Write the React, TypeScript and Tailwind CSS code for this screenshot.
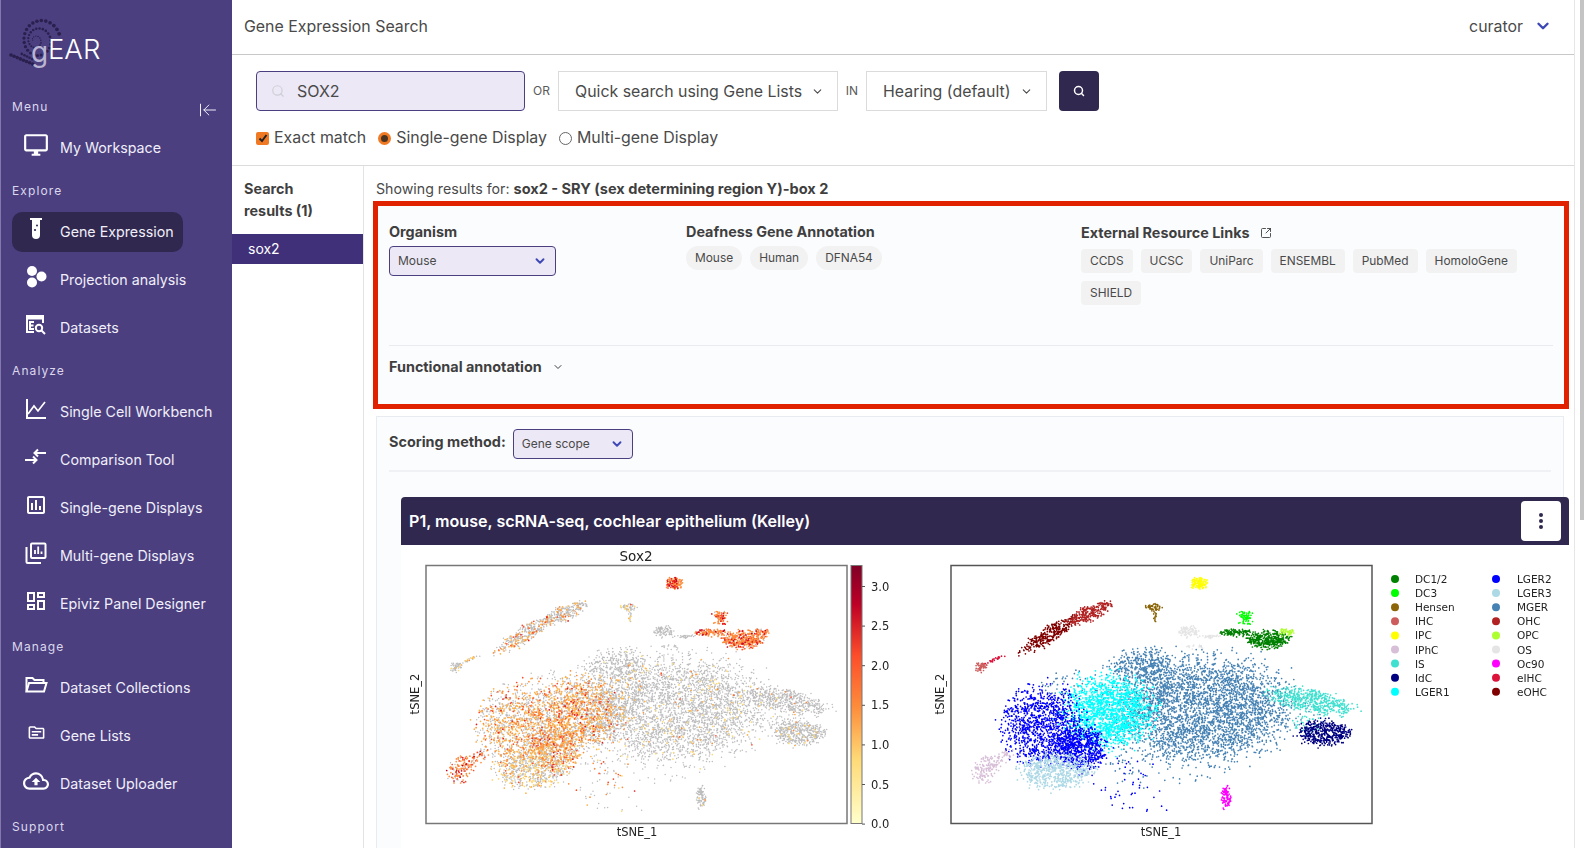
import React from 'react';
import { ArrowLeftToLine, ChevronDown, Search, SquareArrowOutUpRight } from 'lucide-react';
import {
  MdOutlineAssessment,
  MdOutlineCloudUpload,
  MdOutlineDashboard,
  MdOutlineDesktopWindows,
  MdOutlineTopic,
} from 'react-icons/md';

// --- sidebar icons that the packages don't carry ---
const TubeIcon = () => (
  <svg width="14" height="22" viewBox="0 0 14 22" fill="white">
    <rect x="1" y="0" width="12" height="2" />
    <path d="M3 2h8v15a4 4 0 0 1-8 0z" />
    <circle cx="6" cy="12" r="1.1" fill="#30284f" />
    <circle cx="8" cy="7.5" r="1" fill="#30284f" />
  </svg>
);

const CellsIcon = () => (
  <svg width="22" height="24" viewBox="0 0 22 24" fill="white">
    <circle cx="7" cy="6" r="5" />
    <circle cx="16.5" cy="11.5" r="5" />
    <circle cx="7" cy="17.5" r="5" />
  </svg>
);

const DatasetIcon = () => (
  <svg width="22" height="22" viewBox="0 0 22 22" fill="none" stroke="white" strokeWidth="2">
    <path d="M18 9V2H2v16h7" />
    <path d="M2 4h16" strokeWidth="3" />
    <path d="M9 8H5v7h4M5 11.5h3.5" />
    <circle cx="14" cy="14" r="3.2" />
    <path d="M16.5 16.5 20 20" />
  </svg>
);

const ChartIcon = () => (
  <svg width="22" height="22" viewBox="0 0 22 22" fill="none" stroke="white" strokeWidth="2">
    <path d="M2 1v19h19" />
    <path d="M3 16l6-8 4 5 7-9" strokeWidth="1.7" />
  </svg>
);

const CompareIcon = () => (
  <svg width="22" height="18" viewBox="0 0 22 18" fill="none" stroke="white" strokeWidth="2">
    <path d="M0 12h11M8 8.5l3.5 3.5L8 15.5" />
    <path d="M21 5H10M13 1.5 9.5 5l3.5 3.5" />
  </svg>
);

const MultiIcon = () => (
  <svg width="22" height="22" viewBox="0 0 22 22" fill="none" stroke="white" strokeWidth="2">
    <rect x="6" y="1.5" width="14.5" height="14.5" rx="1" />
    <path d="M1.5 5v15a1 1 0 0 0 1 1H16" />
    <path d="M10 12V8M13.2 12V4.5M16.5 12V9.5" strokeWidth="1.8" />
  </svg>
);

const FolderIcon = () => (
  <svg width="23" height="18" viewBox="0 0 23 18" fill="none" stroke="white" strokeWidth="2">
    <path d="M1.5 15.5V2h6l2 2h9v3" />
    <path d="M1.5 15.5 4 7h17.5L19 15.5z" />
  </svg>
);

const Logo = () => {
  const dots: React.ReactNode[] = [];
  // spiral of dots: step along the arc so the spacing stays even
  let a = -0.3;
  for (let t = 0; t < 1; ) {
    const rx = 18 * (1 - t) + 1;
    const ry = 20 * (1 - t) + 1;
    const cx = 40 - 7 * t;
    dots.push(
      <circle key={t} cx={cx + Math.cos(a) * rx} cy={30 + Math.sin(a) * ry} r={1.4 * (1 - t) + 0.5} fill="#2a1f4d" />,
    );
    const step = 3 * (1 - t) + 1.6;
    a -= step / Math.max(rx, 2);
    t = Math.min(1, (-0.3 - a) / 16);
  }
  for (let i = 0; i < 8; i++) {
    dots.push(<circle key={`a${i}`} cx={10 + i * 3.1} cy={45 + i * 1.3} r={1.8} fill="#2a1f4d" />);
    if (i > 2) dots.push(<circle key={`b${i}`} cx={13 + i * 2.6} cy={40 + i * 1.3} r={1.3} fill="#2a1f4d" />);
  }
  return (
    <svg width="110" height="70" viewBox="0 0 110 70" className="absolute left-0 top-[10px]">
      {dots}
    </svg>
  );
};

type NavItem = { label: string; icon: React.ReactNode; active?: boolean };

const sections: { title: string; items: NavItem[] }[] = [
  { title: 'Menu', items: [{ label: 'My Workspace', icon: <MdOutlineDesktopWindows size={26} color="white" /> }] },
  {
    title: 'Explore',
    items: [
      { label: 'Gene Expression', icon: <TubeIcon />, active: true },
      { label: 'Projection analysis', icon: <CellsIcon /> },
      { label: 'Datasets', icon: <DatasetIcon /> },
    ],
  },
  {
    title: 'Analyze',
    items: [
      { label: 'Single Cell Workbench', icon: <ChartIcon /> },
      { label: 'Comparison Tool', icon: <CompareIcon /> },
      { label: 'Single-gene Displays', icon: <MdOutlineAssessment size={24} color="white" /> },
      { label: 'Multi-gene Displays', icon: <MultiIcon /> },
      { label: 'Epiviz Panel Designer', icon: <MdOutlineDashboard size={24} color="white" /> },
    ],
  },
  {
    title: 'Manage',
    items: [
      { label: 'Dataset Collections', icon: <FolderIcon /> },
      { label: 'Gene Lists', icon: <MdOutlineTopic size={19} color="white" /> },
      { label: 'Dataset Uploader', icon: <MdOutlineCloudUpload size={26} color="white" /> },
    ],
  },
  { title: 'Support', items: [] },
];

const Sidebar = () => (
  <aside className="relative w-[232px] shrink-0 overflow-hidden border-l border-[#8278ab] bg-[#4b3f80]">
    <div className="relative h-[98px]">
      <Logo />
      <div className="absolute left-[30px] top-[32px] text-[28px] leading-[40px] text-[#b9b4d2]">g</div>
      <div className="absolute left-[47px] top-[31px] text-[27.5px] leading-[36px] font-light text-white">EAR</div>
    </div>
    <ArrowLeftToLine size={20} strokeWidth={1.2} color="#f0eef8" className="absolute left-[197px] top-[100px]" />
    {sections.map((section, i) => (
      <div key={section.title}>
        <div className={`mb-3 ml-[11px] h-[18px] text-xs leading-[18px] tracking-[1.1px] text-[#dcd8ec] ${i > 0 ? 'mt-[14px]' : ''}`}>
          {section.title}
        </div>
        <div className="flex flex-col gap-2">
          {section.items.map((item) => (
            <div
              key={item.label}
              className={`ml-[11px] flex h-10 w-[171px] items-center whitespace-nowrap rounded-[10px] text-[14.25px] text-[#f0eef8] ${item.active ? 'bg-[#30284f]' : ''}`}
            >
              <span className="mb-[7px] flex w-[48px] shrink-0 justify-center">{item.icon}</span>
              {item.label}
            </div>
          ))}
        </div>
      </div>
    ))}
  </aside>
);

const Caret = ({ size = 16 }: { size?: number }) => (
  <ChevronDown size={size} strokeWidth={3.2} color="#3d47b5" />
);

const FakeSelect = ({ label, width }: { label: string; width: string }) => (
  <div className={`flex h-10 items-center justify-between border border-[#dbdbdb] bg-white pl-[16px] pr-[13px] pt-px text-[15.9px] text-[#4a4a4a] ${width}`}>
    {label}
    <ChevronDown size={13} strokeWidth={2} color="#4a4a4a" />
  </div>
);

const SearchBar = () => (
  <div className="h-[111px] shrink-0 border-b border-[#dcdcdc] pl-6 pt-4">
    <div className="flex items-center">
      <div className="flex h-10 w-[269px] items-center rounded-[4px] border border-[#4b3f80] bg-[#ece8f5] pl-[14px] text-base text-[#4a4a4a]">
        <Search size={14} color="#cfcfd6" strokeWidth={2} />
        <span className="ml-[12px]">SOX2</span>
      </div>
      <span className="w-[33px] text-center text-xs text-[#5a5a5a]">OR</span>
      <FakeSelect label="Quick search using Gene Lists" width="w-[280px]" />
      <span className="w-[28px] text-center text-xs text-[#5a5a5a]">IN</span>
      <FakeSelect label="Hearing (default)" width="w-[181px]" />
      <div className="ml-3 flex h-10 w-10 items-center justify-center rounded-[4px] bg-[#30284f]">
        <Search size={12} color="white" strokeWidth={3} />
      </div>
    </div>
    <div className="mt-[17px] flex items-center text-[15.9px] leading-5 text-[#4a4a4a]">
      <span className="flex h-[13px] w-[13px] items-center justify-center rounded-[2px] bg-[#f07a24]">
        <svg width="10" height="10" viewBox="0 0 10 10" fill="none" stroke="#222" strokeWidth="2">
          <path d="M1.5 5.5 4 8l4.5-6" />
        </svg>
      </span>
      <span className="ml-[5px]">Exact match</span>
      <span className="ml-3 h-[13px] w-[13px] rounded-full border-[3px] border-[#f07a24] bg-[#4a3320]" />
      <span className="ml-[5px]">Single-gene Display</span>
      <span className="ml-3 h-[13px] w-[13px] rounded-full border border-[#666] bg-white" />
      <span className="ml-[5px]">Multi-gene Display</span>
    </div>
  </div>
);

const GeneSelect = ({ label, className }: { label: string; className: string }) => (
  <div className={`flex items-center justify-between rounded-[4px] border border-[#4b3f80] bg-[#ece8f5] pl-2 pr-2 text-xs text-[#4a4a4a] ${className}`}>
    {label}
    <Caret size={14} />
  </div>
);

const GenePanel = () => (
  <div className="ml-[-3px] mr-[-5px] h-[208px] border-[5px] border-[#e02200] bg-[#fbfcfe] px-[11px]">
    <div className="flex h-[139px] pt-[16px]">
      <div className="w-[297px] shrink-0">
        <div className="text-[14.4px] leading-5 font-bold text-[#3f3f3f]">Organism</div>
        <GeneSelect label="Mouse" className="mt-1 h-[30px] w-[167px]" />
      </div>
      <div className="w-[395px] shrink-0">
        <div className="text-[14.4px] leading-5 font-bold text-[#3f3f3f]">Deafness Gene Annotation</div>
        <div className="mt-1 flex gap-2">
          {['Mouse', 'Human', 'DFNA54'].map((t) => (
            <span key={t} className="flex h-6 items-center rounded-full bg-[#f2f2f2] px-[9px] text-[11.9px] text-[#4a4a4a]">
              {t}
            </span>
          ))}
        </div>
      </div>
      <div className="w-[460px]">
        <div className="mt-px flex items-center text-[14.4px] leading-5 font-bold text-[#3f3f3f]">
          External Resource Links
          <SquareArrowOutUpRight size={12} strokeWidth={1.8} className="ml-[10px]" />
        </div>
        <div className="mt-[6px] flex flex-wrap gap-x-2 gap-y-2">
          {['CCDS', 'UCSC', 'UniParc', 'ENSEMBL', 'PubMed', 'HomoloGene', 'SHIELD'].map((t) => (
            <span key={t} className="flex h-6 items-center rounded-[4px] bg-[#f2f2f2] px-[9px] text-[11.9px] text-[#4a4a4a]">
              {t}
            </span>
          ))}
        </div>
      </div>
    </div>
    <div className="flex items-center border-t border-[#e8ebf0] pt-[11px] text-[14.4px] leading-5 font-bold text-[#3f3f3f]">
      Functional annotation
      <ChevronDown size={12} strokeWidth={2} className="ml-[10px]" />
    </div>
  </div>
);

// --- t-SNE plots ---
const mulberry = (seed: number) => () => {
  seed |= 0;
  seed = (seed + 0x6d2b79f5) | 0;
  let t = Math.imul(seed ^ (seed >>> 15), 1 | seed);
  t = (t + Math.imul(t ^ (t >>> 7), 61 | t)) ^ t;
  return ((t ^ (t >>> 14)) >>> 0) / 4294967296;
};

const reds = ['#fed976', '#feb24c', '#fd8d3c', '#fc4e2a', '#e31a1c', '#bd0026'];

type Blob = { color: string; cx: number; cy: number; rx: number; ry: number; rot?: number; n: number; expr: number | ((x: number) => number); hot?: number };

// share of expressing cells falls off towards the right of the LGER1 cloud
const lgerFade = (x: number) => Math.max(0.1, Math.min(0.55, 0.55 - ((x - 150) / 60) * 0.45));

const blobs: Blob[] = [
  { color: '#4682b4', cx: 252, cy: 143, rx: 84, ry: 48, n: 3300, expr: 0.05 },
  { color: '#4682b4', cx: 190, cy: 101, rx: 32, ry: 16, n: 360, expr: 0.04 },
  { color: '#4682b4', cx: 115, cy: 118, rx: 30, ry: 13, n: 40, expr: 0.3, hot: 1 },
  { color: '#4682b4', cx: 215, cy: 195, rx: 70, ry: 25, n: 120, expr: 0.1 },
  { color: '#00ffff', cx: 158, cy: 146, rx: 42, ry: 33, n: 1700, expr: lgerFade, hot: 1 },
  { color: '#0000ff', cx: 92, cy: 160, rx: 40, ry: 36, n: 1150, expr: 0.5, hot: 1 },
  { color: '#0000ff', cx: 130, cy: 183, rx: 24, ry: 20, n: 620, expr: 0.55, hot: 1 },
  { color: '#0000ff', cx: 170, cy: 215, rx: 30, ry: 22, n: 35, expr: 0.5, hot: 2 },
  { color: '#add8e6', cx: 106, cy: 205, rx: 34, ry: 17, n: 620, expr: 0.35 },
  { color: '#d8bfd8', cx: 32, cy: 206, rx: 11, ry: 10, n: 90, expr: 0.85, hot: 2 },
  { color: '#d8bfd8', cx: 42, cy: 196, rx: 10, ry: 8, n: 50, expr: 0.85, hot: 2 },
  { color: '#d8bfd8', cx: 55, cy: 190, rx: 10, ry: 5, rot: -30, n: 25, expr: 0.85, hot: 2 },
  { color: '#40e0d0', cx: 358, cy: 135, rx: 40, ry: 11, rot: 10, n: 520, expr: 0.03 },
  { color: '#40e0d0', cx: 355, cy: 158, rx: 16, ry: 10, n: 40, expr: 0.03 },
  { color: '#000080', cx: 374, cy: 167, rx: 25, ry: 12, n: 450, expr: 0.04 },
  { color: '#ff00ff', cx: 275, cy: 232, rx: 5, ry: 10, n: 90, expr: 0.05 },
  { color: '#800000', cx: 100, cy: 68, rx: 32, ry: 7, rot: -32, n: 300, expr: 0.3, hot: 1 },
  { color: '#b22222', cx: 140, cy: 47, rx: 22, ry: 7, rot: -24, n: 240, expr: 0.15, hot: 1 },
  { color: '#cd5c5c', cx: 30, cy: 101, rx: 6, ry: 5, n: 50, expr: 0.1 },
  { color: '#dc143c', cx: 44, cy: 94, rx: 10, ry: 1.2, rot: -22, n: 20, expr: 0.4 },
  { color: '#ffff00', cx: 248, cy: 18, rx: 8, ry: 6, n: 130, expr: 1, hot: 2 },
  { color: '#8b6508', cx: 203, cy: 42, rx: 7, ry: 4, n: 50, expr: 0.3 },
  { color: '#8b6508', cx: 204, cy: 50, rx: 1.5, ry: 6, n: 15, expr: 0.3 },
  { color: '#e5e5e5', cx: 238, cy: 66, rx: 9, ry: 5, n: 90, expr: 0 },
  { color: '#e5e5e5', cx: 258, cy: 71, rx: 14, ry: 1.5, n: 30, expr: 0 },
  { color: '#e5e5e5', cx: 245, cy: 81, rx: 8, ry: 3, n: 12, expr: 0 },
  { color: '#008000', cx: 318, cy: 74, rx: 20, ry: 8, n: 360, expr: 0.92, hot: 2 },
  { color: '#008000', cx: 285, cy: 67, rx: 15, ry: 3.5, n: 100, expr: 0.9, hot: 2 },
  { color: '#00ff00', cx: 294, cy: 52, rx: 7, ry: 8, n: 70, expr: 0.95, hot: 2 },
  { color: '#adff2f', cx: 335, cy: 67, rx: 7, ry: 4, n: 40, expr: 0.9, hot: 2 },
  { color: '#0000ff', cx: 190, cy: 240, rx: 40, ry: 10, n: 10, expr: 0.5 },
];

const dotPaths = (() => {
  const rand = mulberry(42);
  const right: Record<string, string> = {};
  const leftGrey: string[] = [];
  const leftHot: Record<string, string> = {};
  blobs.forEach((b) => {
    const rot = ((b.rot ?? 0) * Math.PI) / 180;
    for (let i = 0; i < b.n; i++) {
      const a = rand() * Math.PI * 2;
      // soft edge: the radius spills past the ellipse by a little
      const r = Math.sqrt(rand()) * (1 + (rand() + rand() - 1) * 0.45);
      const ex = Math.cos(a) * r * b.rx;
      const ey = Math.sin(a) * r * b.ry;
      const x = b.cx + ex * Math.cos(rot) - ey * Math.sin(rot);
      const y = b.cy + ex * Math.sin(rot) + ey * Math.cos(rot);
      const seg = `M${x.toFixed(1)} ${y.toFixed(1)}h.01`;
      right[b.color] = (right[b.color] ?? '') + seg;
      const p = typeof b.expr === 'function' ? b.expr(x) : b.expr;
      if (rand() < p) {
        const idx = Math.min(5, (b.hot ?? 0) + Math.floor(rand() * rand() * 4));
        leftHot[reds[idx]] = (leftHot[reds[idx]] ?? '') + seg;
      } else {
        leftGrey.push(seg);
      }
    }
  });
  return { right, leftGrey: leftGrey.join(''), leftHot };
})();

const legend = [
  ['DC1/2', '#008000'],
  ['DC3', '#00ff00'],
  ['Hensen', '#8b6508'],
  ['IHC', '#cd5c5c'],
  ['IPC', '#ffff00'],
  ['IPhC', '#d8bfd8'],
  ['IS', '#40e0d0'],
  ['IdC', '#000080'],
  ['LGER1', '#00ffff'],
  ['LGER2', '#0000ff'],
  ['LGER3', '#add8e6'],
  ['MGER', '#4682b4'],
  ['OHC', '#b22222'],
  ['OPC', '#adff2f'],
  ['OS', '#e5e5e5'],
  ['Oc90', '#ff00ff'],
  ['eIHC', '#dc143c'],
  ['eOHC', '#800000'],
];

const Dots = ({ d, color, w = 1.7 }: { d: string; color: string; w?: number }) => (
  <path d={d} stroke={color} strokeWidth={w} strokeLinecap="round" fill="none" />
);

const Figure = () => {
  const plotFont = { fontFamily: '"DejaVu Sans", sans-serif', fill: '#222' };
  return (
    <svg width="1168" height="303" viewBox="0 0 1168 303" className="block blur-[0.4px]" style={plotFont}>
      <defs>
        <linearGradient id="ylorrd" x1="0" y1="1" x2="0" y2="0">
          <stop offset="0" stopColor="#ffffcc" />
          <stop offset="0.25" stopColor="#fed976" />
          <stop offset="0.45" stopColor="#fd8d3c" />
          <stop offset="0.65" stopColor="#fc4e2a" />
          <stop offset="0.85" stopColor="#bd0026" />
          <stop offset="1" stopColor="#800026" />
        </linearGradient>
      </defs>
      <text x="235" y="16" fontSize="13.5" textAnchor="middle">Sox2</text>
      <g transform="translate(25 20.5)">
        <Dots d={dotPaths.leftGrey} color="#bdbdbd" w={1.5} />
        {Object.entries(dotPaths.leftHot).map(([c, d]) => (
          <Dots key={c} d={d} color={c} />
        ))}
        <rect x="0" y="0" width="421" height="258" fill="none" stroke="#777" strokeWidth="1.5" />
      </g>
      <text x="236" y="291" fontSize="11.5" textAnchor="middle">tSNE_1</text>
      <text x="18" y="149" fontSize="11.5" textAnchor="middle" transform="rotate(-90 18 149)">tSNE_2</text>
      <rect x="450" y="20.5" width="11" height="258" fill="url(#ylorrd)" stroke="#777" strokeWidth="1" />
      {['3.0', '2.5', '2.0', '1.5', '1.0', '0.5', '0.0'].map((t, i) => {
        const y = 41.5 + i * 39.6;
        return (
          <g key={t}>
            <path d={`M461 ${y}h3`} stroke="#555" />
            <text x="470" y={y + 4} fontSize="11.5">{t}</text>
          </g>
        );
      })}
      <g transform="translate(550 20.5)">
        {Object.entries(dotPaths.right).map(([c, d]) => (
          <Dots key={c} d={d} color={c} />
        ))}
        <rect x="0" y="0" width="421" height="258" fill="none" stroke="#555" strokeWidth="1.5" />
      </g>
      <text x="760" y="291" fontSize="11.5" textAnchor="middle">tSNE_1</text>
      <text x="543" y="149" fontSize="11.5" textAnchor="middle" transform="rotate(-90 543 149)">tSNE_2</text>
      {legend.map(([name, color], i) => {
        const col = i < 9 ? 0 : 1;
        const y = 34 + (i % 9) * 14.1;
        return (
          <g key={name}>
            <circle cx={994 + col * 101} cy={y} r="4" fill={color} />
            <text x={1014 + col * 102} y={y + 4} fontSize="10.5">{name}</text>
          </g>
        );
      })}
    </svg>
  );
};

const ResultsPanel = () => (
  <div className="mt-[7px] min-h-[500px] border border-[#e8ebf0] bg-[#fbfcfe] pl-3">
    <div className="mr-3 flex h-[55px] items-center border-b-2 border-[#f0f1f4] pt-[1px]">
      <span className="mb-[5px] text-[14.4px] font-bold text-[#3f3f3f]">Scoring method:</span>
      <GeneSelect label="Gene scope" className="ml-[7px] h-[30px] w-[120px]" />
    </div>
    <div className="ml-3 mr-[-6px] mt-[25px]">
      <div className="flex h-12 items-center justify-between rounded-t-[4px] bg-[#30284f] pl-2 pr-2">
        <span className="text-[16.1px] font-semibold text-white">P1, mouse, scRNA-seq, cochlear epithelium (Kelley)</span>
        <span className="flex h-10 w-10 flex-col items-center justify-center gap-[2px] rounded-[4px] bg-white">
          <i className="h-1 w-1 rounded-full bg-[#30284f]" />
          <i className="h-1 w-1 rounded-full bg-[#30284f]" />
          <i className="h-1 w-1 rounded-full bg-[#30284f]" />
        </span>
      </div>
      <div className="bg-white">
        <Figure />
      </div>
    </div>
  </div>
);

const App = () => (
  <div className="flex h-screen w-[1584px] overflow-hidden bg-white [font-family:Inter,sans-serif]">
    <Sidebar />
    <main className="flex min-w-0 flex-1 flex-col">
      <header className="flex h-[55px] shrink-0 items-center justify-between border-b border-[#c8c8c8] pb-px pl-3 pr-[22px] text-[15.9px] text-[#4a4a4a]">
        Gene Expression Search
        <span className="flex items-center gap-[11px]">
          curator
          <Caret size={18} />
        </span>
      </header>
      <SearchBar />
      <div className="flex min-h-0 flex-1">
        <div className="w-[132px] shrink-0 border-r border-[#e4e4e4]">
          <div className="px-3 pt-3 text-[14.4px] leading-[22px] font-bold text-[#3f3f3f]">
            Search
            <br />
            results (1)
          </div>
          <div className="mt-[12px] flex h-[30px] items-center bg-[#40307a] pl-[16px] text-sm text-white">sox2</div>
        </div>
        <div className="min-w-0 flex-1 pl-3 pr-[10px]">
          <div className="flex h-[35px] items-start pt-[13px] text-[14.2px] leading-[20px] text-[#4a4a4a]">
            <span>
              Showing results for: <b className="text-[14.55px] font-bold text-[#3f3f3f]">sox2 - SRY (sex determining region Y)-box 2</b>
            </span>
          </div>
          <GenePanel />
          <ResultsPanel />
        </div>
      </div>
    </main>
    <div className="relative w-[10px] shrink-0 border-l border-[#e6e6e6]">
      <div className="absolute right-0 top-0 h-[520px] w-[4px] bg-[#c4c4c4]" />
    </div>
  </div>
);

export default App;
